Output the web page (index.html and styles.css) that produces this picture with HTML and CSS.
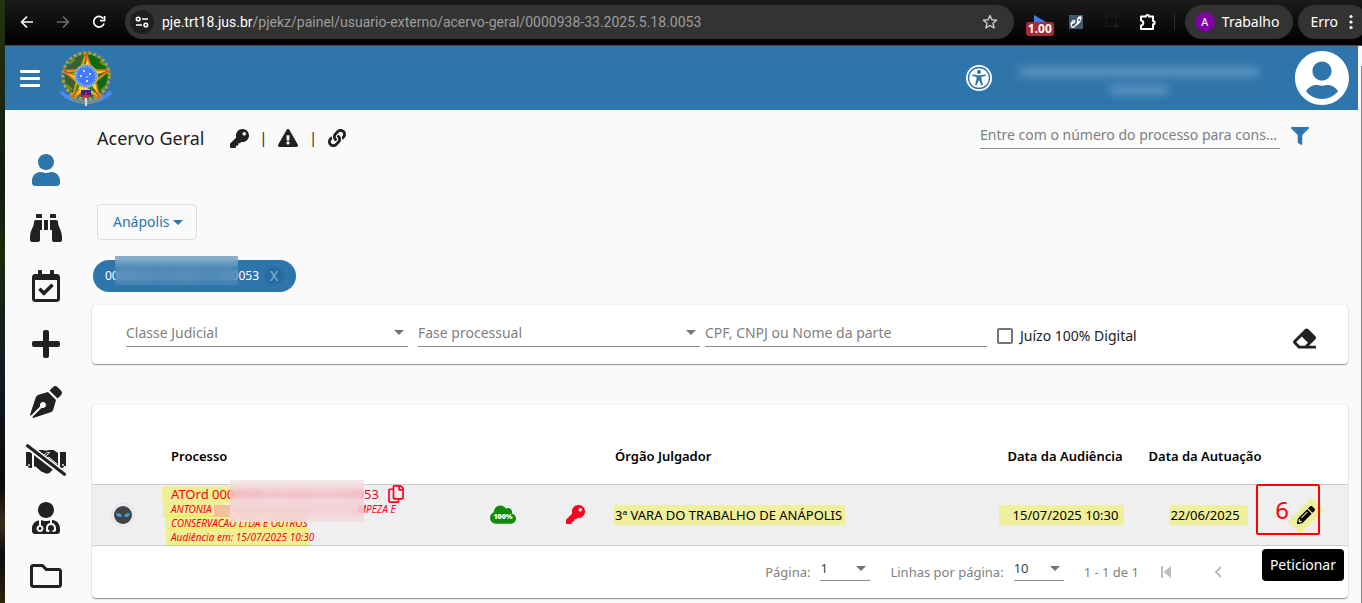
FILE: index.html
```html
<!DOCTYPE html>
<html lang="pt-BR">
<head>
<meta charset="utf-8">
<title>PJe - Acervo Geral</title>
<link rel="stylesheet" href="styles.css">
</head>
<body>
<div class="desktop-edge"></div>
<div class="window">
  <div class="browser-bar">
    <nav class="nav-buttons">
      <button class="nav-button" aria-label="Voltar"><svg width="14" height="14" viewBox="0 0 14 14" fill="none" stroke="#fff" stroke-width="1.700"><path d="M13 7H2M7 1.500 1.500 7 7 12.500"/></svg></button>
      <button class="nav-button" aria-label="Avançar"><svg width="14" height="14" viewBox="0 0 14 14" fill="none" stroke="#6b6b6b" stroke-width="1.700"><path d="M1 7h11M7 1.500 12.500 7 7 12.500"/></svg></button>
      <button class="nav-button" aria-label="Recarregar"><svg width="14" height="14" viewBox="0 0 14 14" fill="none" stroke="#fff" stroke-width="1.700"><path d="M12 8.500A5.300 5.300 0 1 1 11.200 3.500M12.600 1v4.600H8"/></svg></button>
    </nav>
    <div class="address">
      <span class="site-info"><svg width="14" height="12" viewBox="0 0 14 12" fill="none" stroke="#fff" stroke-width="1.600"><circle cx="3.200" cy="3" r="1.800"/><path d="M7 3h6M1 9h6"/><circle cx="10.800" cy="9" r="1.800"/></svg></span>
      <span class="url"><b>pje.trt18.jus.br</b>/pjekz/painel/usuario-externo/acervo-geral/0000938-33.2025.5.18.0053</span>
      <button class="star" aria-label="Favoritar"><svg width="16" height="16" viewBox="0 0 16 16" fill="none" stroke="#ccc" stroke-width="1.400"><path d="m8 1.500 1.900 4.300 4.700.4-3.600 3.100 1.100 4.600L8 11.500l-4.100 2.400L5 9.300 1.400 6.200l4.700-.4z"/></svg></button>
    </div>
    <div class="extensions">
      <button class="ext" aria-label="Velocidade"><svg width="12" height="14" viewBox="0 0 12 14"><path d="M0 0l12 7H0z" fill="#3f80ee"/></svg><span class="ext-badge">1.00</span></button>
      <button class="ext" aria-label="Assinador"><svg width="14" height="14" viewBox="0 0 14 14"><path fill="#42586e" d="M0 0h14v14H0z"/><path d="M1.500 8.500c2.500 0 5-1.500 4-2.800S1.500 8 2.500 11s4 0 5-2" fill="none" stroke="#fff" stroke-width="1.300"/><path d="M12.500 1.500c-3-1-5 1.500-4.500 5L6.500 11c3-1 6.500-4.500 6-9.500z" fill="#fff"/><circle cx="10.300" cy="5" r="1" fill="#42586e"/></svg></button>
      <button class="ext" aria-label="Captura"><svg width="14" height="14" viewBox="0 0 14 14" fill="none" stroke="#1d1d1d" stroke-width="1.500"><path d="M1 4V1h3m2 0h3m1 0h1v3M1 6v3m0 1v1h3m2 0h2m3-5v2m-3 3h6m-3-3v6"/></svg></button>
      <button class="ext" aria-label="Extensões"><svg width="18" height="18" viewBox="0 0 18 18" fill="none" stroke="#fff" stroke-width="2"><path d="M2 3.500h5a1.500 1.500 0 0 1 3 0h4v4.600a1.600 1.600 0 0 1 0 3.200V16H2v-3.600c3-.4 3-4.600 0-5z"/></svg></button>
    </div>
    <button class="profile"><span class="profile-initial">A</span>Trabalho</button>
    <button class="error-chip">Erro <svg width="4" height="16" viewBox="0 0 4 16" fill="#fff"><circle cx="2" cy="2.500" r="1.600"/><circle cx="2" cy="8" r="1.600"/><circle cx="2" cy="13.500" r="1.600"/></svg></button>
  </div>

  <div class="viewport">
    <div class="app">
      <header class="app-header">
        <button class="plain" aria-label="Menu"><svg width="20" height="17" viewBox="0 0 20 17" fill="#fff"><rect width="20" height="3" rx="1"/><rect y="7" width="20" height="3" rx="1"/><rect y="14" width="20" height="3" rx="1"/></svg></button>
        <svg class="emblem" width="56" height="58" viewBox="0 0 56 58" role="img" aria-label="Brasão da República">
          <circle cx="28" cy="27" r="23" fill="none" stroke="#ada227" stroke-width="3.500" stroke-dasharray="3 2"/>
          <circle cx="28" cy="27" r="21.500" fill="#376131"/>
          <path d="M28 5.500a21.500 21.500 0 0 1 0 43z" fill="#0d6b0d"/>
          <path d="M11 15l6-5M9 36l5 5M42 12l4 4M43 42l4-4" stroke="#7e8c21" stroke-width="2"/>
          <path d="M28 4l6 17 17 .5-13.500 11L42 50l-14-9.500L14 50l4.500-17.500L5 21.500 22 21z" fill="#f7df2a" stroke="#e08012" stroke-width="1.800"/>
          <path d="M28 8v19l-4.500-5zM48 23L28 27l9 4zM40 46L28 27v11zM16 46l12-19-8 5zM8 23l20 4-5-5z" fill="#21852a"/>
          <path d="M28 5v8M50 22l-10 4M41 48l-5-8M15 48l6-8M6 22l10 4" stroke="#d3321b" stroke-width="1.200"/>
          <circle cx="28" cy="27" r="11.500" fill="#4f7df0" stroke="#d7c84c"/>
          <circle cx="28" cy="27" r="9.700" fill="#417aff" stroke="#8fb8f5" stroke-width="1.600" stroke-dasharray="1.500 1"/>
          <g fill="#fff"><circle cx="26" cy="22" r="1"/><circle cx="32" cy="25" r="1"/><circle cx="23" cy="27" r="1"/><circle cx="29" cy="28" r=".8"/><circle cx="29" cy="32" r="1"/></g>
          <path d="M1 43l4-1c9 12 37 12 46 0l4 1c-9 15-45 15-54 0z" fill="#4c86f0"/>
          <path d="M11 46c9 8 25 8 34 0l-1.500 4c-9 6-22 6-31 0z" fill="#5b83b1" stroke="#a99f46" stroke-width="1.200" stroke-dasharray="2 1"/>
          <path d="M28 39v18" stroke="#d6d9df" stroke-width="2.200"/>
          <path d="M23 41h10v5H23z" fill="#3a1e9c"/><path d="M24 47h8M28 43v6" stroke="#d32434" stroke-width="1.800"/>
        </svg>
        <button class="plain access" aria-label="Acessibilidade"><svg width="26" height="26" viewBox="0 0 26 26"><circle cx="13" cy="13" r="13" fill="#fff"/><circle cx="13" cy="13" r="10.500" fill="none" stroke="#2e75ab" stroke-width="1.300"/><g fill="#2e75ab"><circle cx="13" cy="7" r="2"/><path d="M6.500 9.200l4.500 1h4l4.500-1 .3 1.500-4.300 1.200v2.600l1.500 5.500-1.600.5-2.100-5h-.6l-2.100 5-1.600-.5 1.500-5.500v-2.600l-4.300-1.200z"/></g></svg></button>
        <div class="user-name" aria-label="Usuário"><span class="haze haze-long"></span><span class="haze haze-short"></span></div>
        <svg class="avatar" width="54" height="54" viewBox="0 8 496 496" fill="#fff"><path d="M248 8C111 8 0 119 0 256s111 248 248 248 248-111 248-248S385 8 248 8zm0 96c48.600 0 88 39.400 88 88s-39.400 88-88 88-88-39.400-88-88 39.400-88 88-88zm0 344c-58.700 0-111.300-26.600-146.500-68.200 18.800-35.400 55.600-59.800 98.500-59.800 2.400 0 4.800.4 7.100 1.100 13 4.200 26.600 6.900 40.900 6.900 14.300 0 28-2.700 40.900-6.900 2.300-.7 4.700-1.100 7.100-1.100 42.900 0 79.700 24.400 98.500 59.800C359.300 421.400 306.700 448 248 448z"/></svg>
      </header>

      <div class="body-row">
        <nav class="sidebar">
          <a href="#" class="side-link active" aria-label="Perfil"><svg height="32" width="28" viewBox="0 0 448 512"><path d="M224 256c70.700 0 128-57.300 128-128S294.700 0 224 0 96 57.300 96 128s57.300 128 128 128zm89.600 32h-16.700c-22.200 10.200-46.900 16-72.900 16s-50.600-5.800-72.900-16h-16.700C60.200 288 0 348.200 0 422.400V464c0 26.500 21.500 48 48 48h352c26.500 0 48-21.500 48-48v-41.600c0-74.200-60.200-134.400-134.400-134.400z"/></svg></a>
          <a href="#" class="side-link" aria-label="Consultar"><svg height="32" width="32" viewBox="0 0 512 512"><path d="M416 48c0-8.840-7.160-16-16-16h-64c-8.840 0-16 7.160-16 16v48h96V48zM63.910 159.990C61.400 253.840 3.460 274.220 0 404v44c0 17.670 14.330 32 32 32h96c17.670 0 32-14.330 32-32V288h32V128H95.840c-17.630 0-31.450 14.370-31.930 31.990zm384.180 0c-.48-17.620-14.300-31.990-31.930-31.990H320v160h32v160c0 17.670 14.330 32 32 32h96c17.670 0 32-14.330 32-32v-44c-3.460-129.780-61.400-150.160-63.910-244.010zM176 32h-64c-8.840 0-16 7.160-16 16v48h96V48c0-8.840-7.160-16-16-16zm48 256h64V128h-64v160z"/></svg></a>
          <a href="#" class="side-link" aria-label="Pauta"><svg height="32" width="28" viewBox="0 0 448 512"><path d="M400 64h-48V12c0-6.627-5.373-12-12-12h-40c-6.627 0-12 5.373-12 12v52H160V12c0-6.627-5.373-12-12-12h-40c-6.627 0-12 5.373-12 12v52H48C21.490 64 0 85.490 0 112v352c0 26.510 21.490 48 48 48h352c26.510 0 48-21.490 48-48V112c0-26.510-21.490-48-48-48zm-6 400H54a6 6 0 0 1-6-6V160h352v298a6 6 0 0 1-6 6zm-52.849-200.650L198.842 404.519c-4.705 4.667-12.303 4.637-16.971-.068l-75.091-75.699c-4.667-4.705-4.637-12.303.068-16.971l22.719-22.536c4.705-4.667 12.303-4.637 16.970.069l44.104 44.461 111.072-110.181c4.705-4.667 12.303-4.637 16.971.068l22.536 22.718c4.667 4.705 4.636 12.303-.069 16.970z"/></svg></a>
          <a href="#" class="side-link" aria-label="Novo processo"><svg height="32" width="28" viewBox="0 0 448 512"><path d="M416 208H272V64c0-17.670-14.330-32-32-32h-32c-17.670 0-32 14.330-32 32v144H32c-17.670 0-32 14.330-32 32v32c0 17.670 14.330 32 32 32h144v144c0 17.670 14.330 32 32 32h32c17.670 0 32-14.330 32-32V304h144c17.670 0 32-14.330 32-32v-32c0-17.670-14.330-32-32-32z"/></svg></a>
          <a href="#" class="side-link" aria-label="Assinar"><svg height="32" width="32" viewBox="0 0 512 512"><path d="M136.600 138.790a64.003 64.003 0 0 0-43.310 41.350L0 460l14.690 14.690L164.800 324.580c-2.990-6.260-4.800-13.180-4.800-20.580 0-26.510 21.490-48 48-48s48 21.490 48 48-21.490 48-48 48c-7.400 0-14.320-1.810-20.580-4.800L37.310 497.310 52 512l279.860-93.290a64.003 64.003 0 0 0 41.350-43.310L416 224 288 96l-151.400 42.790zm361.340-64.620l-60.110-60.110c-18.750-18.750-49.160-18.750-67.910 0l-56.550 56.550 128.020 128.020 56.550-56.550c18.750-18.750 18.750-49.150 0-67.910z"/></svg></a>
          <a href="#" class="side-link" aria-label="Conciliação"><svg height="32" width="40" viewBox="0 0 640 512"><path d="M0 128h96v256H64c-18 0-32-14-32-32H0zM544 128h96v224h-32c0 18-14 32-32 32h-32zM128 140l70-44h70l52 12 50-12h72l70 46v218l-24 30-68 24-40 44-48 16-88-36-92-80h-24z"/><path d="M255 210l60-55c20-18 40-22 65-20l-85 82c-14 14-26 5-40-7zM330 238l36-28 130 108" fill="none" stroke="#fafafa" stroke-width="16"/><path d="M0 12l640 494" stroke="#fafafa" stroke-width="105"/><path d="M25 28l590 456" stroke="currentColor" stroke-width="50" stroke-linecap="round"/><circle cx="48" cy="336" r="15" fill="#fafafa"/><circle cx="592" cy="336" r="15" fill="#fafafa"/></svg></a>
          <a href="#" class="side-link" aria-label="Perito"><svg height="32" width="28" viewBox="0 0 448 512"><path d="M224 256c70.700 0 128-57.300 128-128S294.700 0 224 0 96 57.300 96 128s57.300 128 128 128zM104 424c0 13.300 10.700 24 24 24s24-10.700 24-24-10.700-24-24-24-24 10.700-24 24zm216-135.400v49c36.500 7.400 64 39.800 64 78.400v41.700c0 7.600-5.400 14.200-12.900 15.700l-32.200 6.400c-4.300.9-8.500-1.900-9.400-6.300l-3.100-15.700c-.9-4.300 1.900-8.600 6.300-9.400l19.300-3.900V416c0-62.800-96-65.100-96 1.900v26.700l19.300 3.900c4.300.9 7.100 5.100 6.300 9.400l-3.100 15.700c-.9 4.300-5.100 7.100-9.400 6.300l-31.200-4.200c-7.900-1.100-13.800-7.800-13.800-15.900V416c0-38.600 27.500-70.900 64-78.400v-45.200c-2.200.7-4.400 1.100-6.600 1.900-18 6.300-37.300 9.800-57.400 9.800s-39.400-3.500-57.400-9.800c-7.400-2.600-14.900-4.200-22.600-5.200v81.600c23.100 6.900 40 28.100 40 53.400 0 30.900-25.100 56-56 56s-56-25.100-56-56c0-25.300 16.900-46.500 40-53.400v-80.400C48.500 301 0 355.800 0 422.400v44.800C0 491.900 20.100 512 44.800 512h358.400c24.700 0 44.800-20.100 44.800-44.800v-44.800c0-72-56.800-130.300-128-133.800z"/></svg></a>
          <a href="#" class="side-link" aria-label="Arquivos"><svg height="32" width="32" viewBox="0 0 512 512"><path d="M464 128H272l-54.630-54.630c-6-6-14.140-9.370-22.630-9.370H48C21.490 64 0 85.490 0 112v288c0 26.510 21.490 48 48 48h416c26.510 0 48-21.490 48-48V176c0-26.510-21.490-48-48-48zm0 272H48V112h140.120l54.630 54.630c6 6 14.140 9.370 22.630 9.370H464v224z"/></svg></a>
        </nav>

        <main class="main">
          <div class="title-row">
            <h1>Acervo Geral</h1>
            <div class="title-icons">
              <button class="plain" aria-label="Segredo de justiça"><svg width="19" height="19" viewBox="0 0 512 512"><path d="M512 176.001C512 273.203 433.202 352 336 352c-11.220 0-22.190-1.062-32.827-3.069l-24.012 27.014A23.999 23.999 0 0 1 261.223 384H224v40c0 13.255-10.745 24-24 24h-40v40c0 13.255-10.745 24-24 24H24c-13.255 0-24-10.745-24-24v-78.059c0-6.365 2.529-12.470 7.029-16.971l161.802-161.802C163.108 213.814 160 195.271 160 176 160 78.798 238.797.001 335.999 0 433.488-.001 512 78.511 512 176.001zM336 128c0 26.510 21.490 48 48 48s48-21.490 48-48-21.490-48-48-48-48 21.490-48 48z"/></svg></button>
              <span>|</span>
              <button class="plain" aria-label="Alertas"><svg width="20" height="18" viewBox="0 0 576 512"><path d="M569.517 440.013C587.975 472.007 564.806 512 527.940 512H48.054c-36.937 0-59.999-40.055-41.577-71.987L246.423 23.985c18.467-32.009 64.720-31.951 83.154 0l239.940 416.028zM288 354c-25.405 0-46 20.595-46 46s20.595 46 46 46 46-20.595 46-46-20.595-46-46-46zm-43.673-165.346l7.418 136c.347 6.364 5.609 11.346 11.982 11.346h48.546c6.373 0 11.635-4.982 11.982-11.346l7.418-136c.375-6.874-5.098-12.654-11.982-12.654h-63.383c-6.884 0-12.356 5.780-11.981 12.654z"/></svg></button>
              <span>|</span>
              <button class="plain" aria-label="Associados"><svg width="18" height="18" viewBox="0 0 512 512"><path d="M326.612 185.391c59.747 59.809 58.927 155.698.36 214.590-.11.12-.24.25-.36.37l-67.200 67.200c-59.270 59.270-155.699 59.262-214.960 0-59.270-59.260-59.270-155.700 0-214.960l37.106-37.106c9.840-9.840 26.786-3.300 27.294 10.606.648 17.722 3.826 35.527 9.690 52.721 1.986 5.822.567 12.262-3.783 16.612l-13.087 13.087c-28.026 28.026-28.905 73.660-1.155 101.960 28.024 28.579 74.086 28.749 102.325.51l67.200-67.190c28.191-28.191 28.073-73.757 0-101.830-3.701-3.694-7.429-6.564-10.341-8.569a16.037 16.037 0 0 1-6.947-12.606c-.396-10.567 3.348-21.456 11.698-29.806l21.054-21.055c5.521-5.521 14.182-6.199 20.584-1.731a152.482 152.482 0 0 1 20.522 17.197zM467.547 44.449c-59.261-59.262-155.690-59.270-214.960 0l-67.200 67.200c-.12.12-.25.25-.36.37-58.566 58.892-59.387 154.781.36 214.590a152.454 152.454 0 0 0 20.521 17.196c6.402 4.468 15.064 3.789 20.584-1.731l21.054-21.055c8.350-8.350 12.094-19.239 11.698-29.806a16.037 16.037 0 0 0-6.947-12.606c-2.912-2.005-6.640-4.875-10.341-8.569-28.073-28.073-28.191-73.639 0-101.830l67.200-67.190c28.239-28.239 74.300-28.069 102.325.51 27.750 28.300 26.872 73.934-1.155 101.960l-13.087 13.087c-4.350 4.350-5.769 10.790-3.783 16.612 5.864 17.194 9.042 34.999 9.690 52.721.509 13.906 17.454 20.446 27.294 10.606l37.106-37.106c59.271-59.259 59.271-155.699.001-214.959z"/></svg></button>
            </div>
            <input class="search" type="text" aria-label="Número do processo" placeholder="Entre com o número do processo para consultar">
            <button class="plain filter" aria-label="Filtrar"><svg width="18" height="18" viewBox="0 0 512 512"><path d="M487.976 0H24.028C2.710 0-8.047 25.866 7.058 40.971L192 225.941V432c0 7.831 3.821 15.170 10.237 19.662l80 55.980C298.020 518.690 320 507.493 320 487.980V225.941l184.947-184.970C520.021 25.896 509.338 0 487.976 0z"/></svg></button>
          </div>

          <button class="city">Anápolis <span class="caret"></span></button>

          <div class="chip"><span>0000938-33.2025.5.18.0053</span><button class="chip-close" aria-label="Remover">X</button><span class="chip-veil"></span></div>

          <section class="card filters">
            <div class="field pick grow"><select aria-label="Classe Judicial"><option>Classe Judicial</option></select></div>
            <div class="field pick grow"><select aria-label="Fase processual"><option>Fase processual</option></select></div>
            <div class="field grow"><input type="text" aria-label="CPF, CNPJ ou Nome da parte" placeholder="CPF, CNPJ ou Nome da parte"></div>
            <label class="check"><input type="checkbox">Juízo 100% Digital</label>
            <button class="plain eraser" aria-label="Limpar filtros"><svg width="23" height="23" viewBox="0 0 512 512"><path d="M497.941 273.941c18.745-18.745 18.745-49.137 0-67.882l-160-160c-18.745-18.745-49.136-18.746-67.883 0l-256 256c-18.745 18.745-18.745 49.137 0 67.882l96 96A48.004 48.004 0 0 0 144 480h356c6.627 0 12-5.373 12-12v-40c0-6.627-5.373-12-12-12H355.883l142.058-142.059zm-302.627-62.627l137.373 137.373L265.373 416H150.628l-80-80 124.686-124.686z"/></svg></button>
          </section>

          <section class="card results">
            <table>
              <colgroup><col class="c-icon"><col class="c-proc"><col class="c-flag"><col class="c-flag"><col><col class="c-date"><col class="c-date"><col class="c-act"></colgroup>
              <thead><tr><th></th><th>Processo</th><th></th><th></th><th class="court-cell">Órgão Julgador</th><th class="center">Data da Audiência</th><th class="center">Data da Autuação</th><th></th></tr></thead>
              <tbody><tr>
                <td><svg class="alien" width="24" height="24" viewBox="0 0 24 24"><circle cx="12" cy="12" r="11.500" fill="#ececec" stroke="#e2e2e2"/><circle cx="12" cy="12" r="9" fill="#424249"/><path d="M5 10.500c3-1 5.500 0 6 3-3 1-5.500 0-6-3zM19 10.500c-3-1-5.500 0-6 3 3 1 5.500 0 6-3z" fill="#3fa2d8"/></svg></td>
                <td><div class="process">
                  <div class="process-number"><a href="#">ATOrd 0000938-33.2025.5.18.0053</a><button class="plain" aria-label="Copiar"><svg width="16" height="18" viewBox="0 0 448 512"><path d="M433.941 65.941l-51.882-51.882A48 48 0 0 0 348.118 0H176c-26.510 0-48 21.490-48 48v48H48c-26.510 0-48 21.490-48 48v320c0 26.510 21.490 48 48 48h224c26.510 0 48-21.490 48-48v-48h80c26.510 0 48-21.490 48-48V99.882a48 48 0 0 0-14.059-33.941zM266 464H54a6 6 0 0 1-6-6V150a6 6 0 0 1 6-6h74v224c0 26.510 21.490 48 48 48h96v42a6 6 0 0 1-6 6zm128-96H182a6 6 0 0 1-6-6V54a6 6 0 0 1 6-6h106v88c0 13.255 10.745 24 24 24h88v202a6 6 0 0 1-6 6zm6-256h-64V48h9.632c1.591 0 3.117.632 4.243 1.757l48.368 48.368a6 6 0 0 1 1.757 4.243V112z"/></svg></button></div>
                  <div class="party">ANTONIA <span class="hidden-name"></span>MPEZA E</div>
                  <div class="party">CONSERVACAO LTDA E OUTROS</div>
                  <div class="party">Audiência em: 15/07/2025 10:30</div>
                  <span class="marker m1"></span><span class="marker m2"></span><span class="marker m3"></span><span class="marker m4"></span>
                  <span class="veil veil-side"></span><span class="veil"></span>
                </div></td>
                <td><svg class="flag" width="26" height="19" viewBox="0 0 640 468"><path fill="#148a0b" d="M537.600 206.600c4.100-10.700 6.400-22.400 6.400-34.600 0-53-43-96-96-96-19.700 0-38.100 6-53.300 16.200C367 44.200 315.300 12 256 12c-88.400 0-160 71.600-160 160 0 2.700.1 5.400.2 8.100C40.200 199.800 0 253.200 0 316c0 79.500 64.500 144 144 144h368c70.700 0 128-57.300 128-128 0-61.900-44-113.600-102.400-125.400z"/><text x="320" y="355" class="cloud-text">100%</text></svg></td>
                <td><svg class="flag red" width="19" height="19" viewBox="0 0 512 512"><path d="M512 176.001C512 273.203 433.202 352 336 352c-11.220 0-22.190-1.062-32.827-3.069l-24.012 27.014A23.999 23.999 0 0 1 261.223 384H224v40c0 13.255-10.745 24-24 24h-40v40c0 13.255-10.745 24-24 24H24c-13.255 0-24-10.745-24-24v-78.059c0-6.365 2.529-12.470 7.029-16.971l161.802-161.802C163.108 213.814 160 195.271 160 176 160 78.798 238.797.001 335.999 0 433.488-.001 512 78.511 512 176.001zM336 128c0 26.510 21.490 48 48 48s48-21.490 48-48-21.490-48-48-48-48 21.490-48 48z"/></svg></td>
                <td class="court-cell"><mark class="court">3ª VARA DO TRABALHO DE ANÁPOLIS</mark></td>
                <td class="center"><mark class="hearing">15/07/2025 10:30</mark></td>
                <td class="center"><mark class="filed">22/06/2025</mark></td>
                <td><div class="action">
                  <span class="pencil-mark"></span>
                  <button class="plain pencil" aria-label="Peticionar"><svg width="18" height="18" viewBox="0 0 512 512"><path d="M497.900 142.100l-46.100 46.100c-4.700 4.700-12.300 4.700-17 0l-111-111c-4.700-4.700-4.700-12.300 0-17l46.100-46.100c18.700-18.700 49.100-18.700 67.900 0l60.100 60.100c18.800 18.700 18.800 49.100 0 67.900zM284.200 99.800L21.600 362.400.4 483.900c-2.900 16.400 11.400 30.600 27.800 27.800l121.500-21.300 262.600-262.600c4.700-4.700 4.700-12.300 0-17l-111-111c-4.800-4.700-12.400-4.700-17.100 0zM124.100 339.900c-5.500-5.500-5.500-14.300 0-19.800l154-154c5.500-5.500 14.300-5.500 19.800 0s5.500 14.300 0 19.800l-154 154c-5.500 5.500-14.300 5.500-19.800 0zM88 424h48v36.300l-64.500 11.300-31.100-31.100L51.700 376H88v48z"/></svg></button>
                  <span class="step">6</span>
                  <span class="tooltip" role="tooltip">Peticionar</span>
                </div></td>
              </tr></tbody>
            </table>
            <div class="pager">
              <label for="pg">Página:</label>
              <div class="field pick small"><select id="pg"><option>1</option></select></div>
              <label for="rows">Linhas por página:</label>
              <div class="field pick small"><select id="rows"><option>10</option></select></div>
              <span class="range">1 - 1 de 1</span>
              <button class="plain page-button" aria-label="Primeira página"><svg width="10" height="12" viewBox="0 0 10 12"><path d="M0 0h2v12H0zM10 0v12L2.500 6z"/></svg></button>
              <button class="plain page-button" aria-label="Página anterior"><svg width="8" height="12" viewBox="0 0 8 12" fill="none" stroke="currentColor" stroke-width="2"><path d="M7 1 2 6l5 5"/></svg></button>
            </div>
          </section>
        </main>
      </div>
    </div>
    <div class="scrollbar"><span></span></div>
  </div>
</div>
</body>
</html>
```
FILE: styles.css
```css
* { box-sizing: border-box; }

body {
  margin: 0;
  display: flex;
  height: 100vh;
  overflow: hidden;
  background: #fafafa;
  color: #212121;
  font: 14px/20px "Noto Sans", sans-serif;
}

button, input, select { font: inherit; color: inherit; }
button { cursor: pointer; }
svg { display: block; flex: none; }
path { stroke-linejoin: round; }
.side-link svg, .main svg { fill: currentColor; }
.main svg[fill="none"] { fill: none; }

.desktop-edge {
  flex: none;
  width: 5px;
  background: linear-gradient(#26330f 0, #121c10 30%, #1c2a0c 42%, #111b26 62%, #0a0a09 80%, #3a2c1a 87%, #0d0d0c 92%, #30240f 100%);
}
.window { flex: 1; min-width: 0; display: flex; flex-direction: column; }

/* Browser toolbar */
.browser-bar {
  flex: none;
  display: flex;
  align-items: center;
  height: 46px;
  padding-bottom: 1px;
  overflow: hidden;
  background: linear-gradient(#1b1b1b, #000);
  border-bottom: 1px solid #4d4d4d;
  color: #fff;
}
.nav-buttons { display: flex; padding-left: 4px; margin-right: 8px; }
.nav-button { display: flex; justify-content: center; width: 36px; padding: 0; border: 0; background: none; }
.address {
  flex: 1;
  display: flex;
  align-items: center;
  gap: 8px;
  min-width: 0;
  height: 34px;
  padding: 0 16px 0 5px;
  border-radius: 17px;
  background: #333;
}
.site-info { display: grid; place-items: center; width: 24px; height: 24px; border-radius: 50%; background: #1f1f1f; }
.url { flex: 1; color: #9d9d9d; font-family: Roboto, sans-serif; white-space: nowrap; overflow: hidden; }
.url b { color: #fff; font-weight: 400; }
.star { padding: 0; border: 0; background: none; }
.extensions {
  display: flex;
  align-items: center;
  height: 16px;
  margin: 0 10px 0 8px;
  padding-right: 8px;
  border-right: 1px solid #2b2b2b;
}
.ext { position: relative; display: flex; justify-content: center; width: 36px; padding: 0; border: 0; background: none; }
.ext-badge {
  position: absolute;
  left: 4px;
  top: 7px;
  width: 28px;
  border-radius: 3px;
  background: #a72b36;
  font-size: 12px;
  line-height: 14px;
  font-weight: 700;
  color: #fff;
}
.profile, .error-chip {
  flex: none;
  display: flex;
  align-items: center;
  height: 34px;
  border: 0;
  border-radius: 17px;
  background: #333;
  color: #fff;
}
.profile { gap: 7px; padding: 0 14px 0 10px; margin-right: 5px; }
.profile-initial { width: 20px; height: 20px; border-radius: 50%; background: #7b04a3; font-size: 11px; line-height: 20px; }
.error-chip { gap: 11px; margin-right: -6px; padding: 0 15px 0 12px; }

/* Application frame */
.viewport { flex: 1; display: flex; min-height: 0; }
.app { flex: 1; min-width: 0; background: #fafafa; }
.scrollbar { width: 4px; padding-top: 20px; background: #fafafa; }
.scrollbar span { display: block; width: 1px; height: 100%; margin-left: 3px; background: #858585; }
.plain { display: flex; padding: 0; border: 0; background: none; }

.app-header { display: flex; align-items: center; height: 64px; padding: 0 9px 0 15px; background: #2e75ab; }
.emblem { margin-left: 18px; }
.access { margin-left: auto; }
.user-name {
  display: flex;
  flex-direction: column;
  align-items: center;
  gap: 8px;
  width: 272px;
  height: 38px;
  margin-right: 31px;
  padding: 8px 0 0 22px;
  background: #3075aa;
}
.haze { height: 10px; border-radius: 5px; background: #5a92c0; filter: blur(4px); }
.haze-long { width: 240px; }
.haze-short { width: 60px; }

.body-row { display: flex; }
.sidebar { flex: none; width: 82px; padding-top: 31px; }
.side-link { display: grid; place-items: center; height: 58px; color: #212121; }
.side-link.active { color: #2e75ab; }

.main { flex: 1; min-width: 0; padding: 0 10px 0 5px; }
.title-row { display: flex; align-items: center; height: 56px; padding: 0 39px 0 5px; }
h1 { margin: 0 25px 0 0; font-size: 18px; line-height: 24px; font-weight: 400; }
.title-icons { display: flex; align-items: center; gap: 11px; }
.search {
  width: 300px;
  height: 28px;
  margin: 0 11px 6px auto;
  padding: 0;
  border: 0;
  border-bottom: 1px solid #8c8c8c;
  background: none;
  text-overflow: ellipsis;
}
::placeholder { color: #808080; opacity: 1; }
.filter { color: #2e75ab; margin-bottom: 4px; }

.city {
  display: flex;
  align-items: center;
  gap: 4px;
  height: 36px;
  margin: 38px 0 20px 5px;
  padding: 0 13px 0 15px;
  border: 1px solid #ddd;
  border-radius: 4px;
  background: none;
  color: #2e75ab;
}
.caret { border: 5px solid transparent; border-top-color: currentColor; border-bottom: 0; }

.chip {
  position: relative;
  display: flex;
  align-items: center;
  gap: 5px;
  width: fit-content;
  height: 32px;
  margin: 0 0 13px 1px;
  padding: 0 12px;
  border-radius: 16px;
  background: #2e75ab;
  color: #fff;
  font-size: 12px;
}
.chip-close { width: 20px; height: 18px; padding: 0; border: 0; border-radius: 50%; background: #286b9f; color: #8ab3d3; font-size: 14px; line-height: 18px; }
.chip-veil {
  position: absolute;
  left: 22px;
  top: -4px;
  width: 123px;
  height: 29px;
  background: linear-gradient(#84aecb, rgba(90, 145, 185, .5) 40%, rgba(72, 132, 177, .6));
  backdrop-filter: blur(5px);
}

.card { border-radius: 4px; background: #fff; box-shadow: 0 1px 1px rgba(0, 0, 0, .4), 0 0 2px rgba(0, 0, 0, .15); }
.filters { display: flex; align-items: center; height: 59px; padding: 0 32px 0 34px; gap: 5px; }
.field { position: relative; height: 28px; border-bottom: 1px solid #8c8c8c; }
.field select, .field input { width: 100%; height: 27px; padding: 0; border: 0; background: none; appearance: none; outline: 0; }
.grow { flex: 0 1 282px; color: #808080; }
.filters .field { margin-bottom: 4px; }
.filters .field:first-child { margin-right: 5px; }
.filters select { padding-top: 1px; }
.pick::after {
  content: "";
  position: absolute;
  right: 4px;
  top: 11px;
  border: 5px solid transparent;
  border-top-color: #757575;
  border-bottom: 0;
  pointer-events: none;
}
.check { display: flex; align-items: center; gap: 7px; margin: 2px 0 0 5px; }
.check input { width: 16px; height: 16px; margin: 0; appearance: none; border: 2px solid #757575; border-radius: 2px; }
.eraser { margin-left: auto; margin-top: 8px; }

/* Results */
.results { margin-top: 41px; font-size: 13px; color: #000; }
table { width: 100%; border-collapse: collapse; table-layout: fixed; }
.c-icon { width: 79px; }
.c-proc { width: 296px; }
.c-flag { width: 72px; }
.c-date { width: 140px; }
.c-act { width: 73px; }
th { height: 79px; padding: 23px 0 0; text-align: left; font-weight: 600; }
td { height: 61px; padding: 0; background: #efefef; border: solid #ccc; border-width: 1px 0; }
th.center, td.center { text-align: center; }
.court-cell { padding-left: 4px; }
.alien { margin: 0 0 0 19px; }
.flag { margin: 0 auto; }
.red { color: #fd0121; }
.cloud-text { font: 900 175px "Noto Sans", sans-serif; fill: #fff; text-anchor: middle; }

.process { position: relative; color: #fd0121; }
.process-number { display: flex; gap: 9px; height: 17px; align-items: center; }
.process a { color: inherit; text-decoration: none; }
.process .plain { color: inherit; }
.party { display: flex; height: 14px; font-size: 10px; line-height: 14px; font-style: italic; white-space: nowrap; }
.hidden-name { width: 146px; }
.marker { position: absolute; background: #ffffa0; mix-blend-mode: multiply; }
.m1 { left: -9px; top: 1px; width: 74px; height: 17px; }
.m2 { left: -8px; top: 18px; width: 62px; height: 14px; }
.m3 { left: -6px; top: 30px; width: 140px; height: 14px; }
.m4 { left: -5px; top: 43px; width: 144px; height: 18px; }
.veil {
  position: absolute;
  left: 59px;
  top: -5px;
  width: 134px;
  height: 42px;
  background: linear-gradient(rgba(240, 228, 231, .75), rgba(247, 190, 200, .6) 35%, rgba(242, 215, 220, .7) 50%, rgba(247, 190, 200, .65) 70%, rgba(240, 222, 226, .8));
  backdrop-filter: blur(5px);
}
.veil-side { left: 43px; top: 20px; width: 16px; height: 12px; background: #f0c39a; }
mark { display: inline-block; color: inherit; background: #f0ef9c; line-height: 20px; }
.court { margin-left: -1px; padding: 0 3px 0 1px; }
.hearing { margin-left: -7px; padding: 0 6px 0 14px; }
.filed { margin-left: 7px; padding: 0 8px 0 1px; }

.action { position: relative; display: flex; align-items: center; height: 60px; padding-left: 22px; }
.pencil { position: relative; }
.pencil-mark { position: absolute; left: 14px; top: 22px; width: 34px; height: 18px; background: #f0ef9c; transform: rotate(-45deg); }
.step {
  position: absolute;
  left: -19px;
  top: -1px;
  width: 64px;
  height: 51px;
  padding-right: 12px;
  border: 2px solid #fe0000;
  border-radius: 2px;
  color: #fe0000;
  font-size: 24px;
  line-height: 48px;
  text-align: center;
}
.tooltip {
  position: absolute;
  right: 4px;
  top: 64px;
  padding: 6px 8px;
  border-radius: 4px;
  background: #000;
  color: #fff;
  font-size: 14px;
  line-height: 20px;
}

.pager { display: flex; align-items: center; height: 52px; padding-right: 126px; justify-content: flex-end; color: #808080; }
.small { width: 50px; height: 24px; margin: 0 20px 6px 10px; color: #424242; }
.small select { height: 22px; }
.small::after { top: 9px; }
.page-button { color: #bdbdbd; }
.range { margin-right: 22px; }
.page-button + .page-button { margin-left: 43px; }
```
